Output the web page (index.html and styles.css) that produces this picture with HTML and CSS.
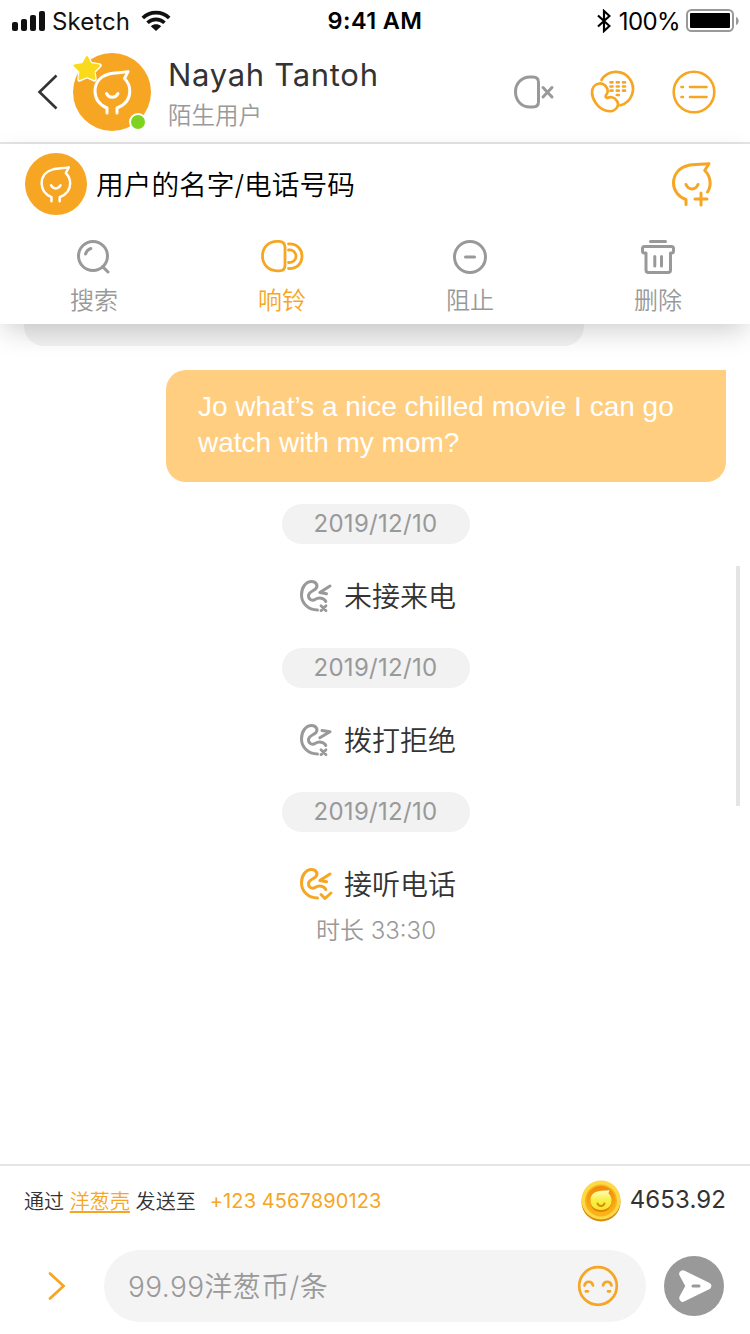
FILE: index.html
```html
<!DOCTYPE html>
<html lang="zh-CN">
<head>
<meta charset="utf-8">
<title>Chat</title>
<link rel="stylesheet" href="styles.css">
</head>
<body>
<svg class="defs" width="0" height="0">
  <symbol id="onion" viewBox="0 0 39 45">
    <path d="M14 43V38C7 35 2 29 2 21C2 12 8 6 16 4C22 2.800 29 2.800 35 1.600L31.500 8.500C35 12 36.800 16.500 36.800 21C36.800 29 32 35 24 38V43"/>
    <path d="M13.500 23.500C16 28.500 22.500 28.500 25 23.500"/>
  </symbol>
  <symbol id="handset" viewBox="0 0 36 36">
    <path d="M18.500 31C9 31 2.500 24 2.500 16C2.500 8 7 2.500 12.700 2.500C17 2.500 19.300 6.500 17 9.500C15 12 9.500 12.500 9.500 16.700C9.500 20.500 13.300 22.300 16 20.500C20 18 25 18.800 26.800 22.500"/>
  </symbol>
</svg>
<div class="phone">
  <header class="status">
    <div class="status-left">
      <svg width="34" height="22" viewBox="0 0 34 22"><g fill="#111"><rect x="0" y="12" width="6" height="9" rx="2"/><rect x="9" y="9" width="6" height="12" rx="2"/><rect x="18" y="5" width="6" height="16" rx="2"/><rect x="27" y="1" width="6" height="20" rx="2"/></g></svg>
      <span class="carrier">Sketch</span>
      <svg class="wifi" width="30" height="22" viewBox="0 0 30 22"><g fill="none" stroke="#111" stroke-width="3.600"><path d="M1.800 8C9 .800 21 .800 28.200 8"/><path d="M6.500 12.800C11.500 8.200 18.500 8.200 23.500 12.800"/></g><path d="M9.800 16.200C13 13.700 17 13.700 20.200 16.200L15 21Z" fill="#111"/></svg>
    </div>
    <span class="clock">9:41 AM</span>
    <div class="status-right">
      <svg width="14" height="24" viewBox="0 0 14 24"><path d="M1 6.500L12.500 17L7 22V2L12.500 7L1 17.500" fill="none" stroke="#000" stroke-width="2.200"/></svg>
      <span class="percent">100%</span>
      <svg width="53" height="24" viewBox="0 0 53 24"><rect x="1" y="1" width="46" height="21" rx="4.500" fill="none" stroke="#999" stroke-width="2"/><rect x="4" y="4" width="40" height="15" rx="1" fill="#000"/><path d="M50 8C53.500 9 53.500 15 50 16Z" fill="#999"/></svg>
    </div>
  </header>

  <section class="topbar">
    <svg class="back" width="22" height="36" viewBox="0 0 22 36"><path d="M19.500 1.500L2.500 18L19.500 34.500" fill="none" stroke="#333" stroke-width="2.600"/></svg>
    <div class="avatar">
      <svg class="face" width="39" height="45"><use href="#onion"/></svg>
      <svg class="star" width="32" height="30" viewBox="0 0 32 30"><path d="M15 3L18.500 10L27.500 11.500L21.500 17.500L22.500 25.500L15 22L7.500 25.500L8.500 17.500L2 11.500L11 10Z" fill="#fff" stroke="#fff" stroke-width="4.500" stroke-linejoin="round"/><path d="M15 3L18.500 10L27 11.500L21.500 17.500L22.500 25L15 22L7.500 25L8.500 17.500L2.500 11.500L11 10Z" fill="#f9db1c" stroke="#f9db1c" stroke-width="2" stroke-linejoin="round"/></svg>
      <span class="online"></span>
    </div>
    <div class="who">
      <span class="name">Nayah Tantoh</span>
      <span class="kind">陌生用户</span>
    </div>
    <div class="actions">
      <svg class="mute" width="44" height="36" viewBox="0 0 44 36" fill="none" stroke="#999" stroke-width="3" stroke-linecap="round"><path d="M17 3H20Q25.500 3 25.500 8.500V27.500Q25.500 33 20 33H17C8.500 33 2.500 26.500 2.500 18S8.500 3 17 3Z"/><path d="M30 13.500L39 23M39 13.500L30 23"/></svg>
      <svg width="46" height="44" viewBox="0 0 46 44" fill="none" stroke="#f6a623" stroke-width="2.700" stroke-linecap="round"><path d="M11.500 10A17 17 0 1 1 30.500 35.300"/><path d="M9.500 13.500C14 13 18 17.500 17.700 21.500C17.500 24.500 14.800 25 15.800 27.200C16.800 29 18.500 26.500 22 27.300C26 28.300 29.500 33 27.500 36.700C25.500 40.500 21 42.300 15.500 40.500C8 38 2 29.500 2 22.500C2 17.500 5 14 9.500 13.500Z"/><path d="M20.500 12.300H22.500M26.800 12.300H28.800M33 12.300H35M20.500 16.500H22.500M26.800 16.500H28.800M33 16.500H35M20.500 20.700H22.500M26.800 20.700H28.800M33 20.700H35M26.800 25H28.800"/></svg>
      <svg width="44" height="44" viewBox="0 0 44 44" fill="none" stroke="#f6a623" stroke-width="2.600" stroke-linecap="round"><circle cx="22" cy="22" r="20.300"/><path d="M9.500 17H11M18 17H34.500M9.500 27H11M18 27H34.500"/></svg>
    </div>
  </section>

  <section class="panel">
    <div class="contact">
      <div class="avatar small"><svg class="face" width="32" height="37"><use href="#onion"/></svg></div>
      <span class="contact-name">用户的名字/电话号码</span>
      <svg class="add" width="42" height="46" viewBox="0 0 42 46" fill="none" stroke="#f6a623" stroke-width="3" stroke-linecap="round" stroke-linejoin="round"><path d="M15 43.500V38.500C7.500 36 2.500 29.500 2.500 22C2.500 13 8.500 6.500 17 4.500C23 3.300 31 3.500 38 2.700L33.700 9.500C39.500 15 41 24 36.500 31"/><path d="M15 23.500C17.500 29.500 24.500 29.500 27 23.500M30 32V44M24 38H36"/></svg>
    </div>
    <nav class="tools">
      <div class="tool"><svg width="36" height="36" viewBox="0 0 36 36" fill="none" stroke="#999" stroke-width="3" stroke-linecap="round"><circle cx="17" cy="17" r="14.500"/><path d="M26.500 27.500L32 33M9.500 15C10.500 12 12 10.300 14.800 9.500"/></svg><span>搜索</span></div>
      <div class="tool on"><svg width="44" height="36" viewBox="0 0 44 36" fill="none" stroke="#f6a623" stroke-width="2.800" stroke-linecap="round"><path d="M17 2.400H19Q25 2.400 25 8.500V26.500Q25 31.800 19 31.800H17C8.500 31.800 2.500 25.500 2.500 17S8.500 2.400 17 2.400Z"/><path d="M28.500 5C46.500 4 46.500 30.500 28.500 29.500M28.500 11C38.500 10 38.500 24.500 28.500 23.500"/></svg><span>响铃</span></div>
      <div class="tool"><svg width="36" height="36" viewBox="0 0 36 36" fill="none" stroke="#999" stroke-width="3" stroke-linecap="round"><circle cx="18" cy="18" r="15.500"/><path d="M13.500 18H22.500"/></svg><span>阻止</span></div>
      <div class="tool"><svg width="36" height="36" viewBox="0 0 36 36" fill="none" stroke="#999" stroke-width="3" stroke-linecap="round" stroke-linejoin="round"><path d="M10.500 2.500H25.500M6 14H4.500Q2.500 14 2.500 12V9.500Q2.500 7.500 4.500 7.500H31.500Q33.500 7.500 33.500 9.500V12Q33.500 14 31.500 14H30.500V31Q30.500 33.500 28 33.500H8.500Q6 33.500 6 31ZM14.800 17.500V27M21.500 17.500V27"/></svg><span>删除</span></div>
    </nav>
  </section>

  <main class="chat">
    <div class="bubble incoming"></div>
    <div class="bubble outgoing">Jo what’s a nice chilled movie I can go<br>watch with my mom?</div>
    <div class="entry">
      <span class="date">2019/12/10</span>
      <div class="call"><svg class="missed" width="36" height="36" viewBox="0 0 36 36"><use href="#handset" width="36" height="36"/><path d="M31 7L20.800 13.500L27.500 14.700"/><path class="cross" d="M22 26.700L27 31.700M27 26.700L22 31.700"/></svg><span>未接来电</span></div>
    </div>
    <div class="entry">
      <span class="date">2019/12/10</span>
      <div class="call"><svg class="missed" width="36" height="36" viewBox="0 0 36 36"><use href="#handset" width="36" height="36"/><path d="M23 7.500L31 8.700L20.800 14.800"/><path class="cross" d="M22 26.700L27 31.700M27 26.700L22 31.700"/></svg><span>拨打拒绝</span></div>
    </div>
    <div class="entry">
      <span class="date">2019/12/10</span>
      <div class="call"><svg class="answered" width="36" height="36" viewBox="0 0 36 36"><use href="#handset" width="36" height="36"/><path d="M31 7L20.800 13.500L27.500 14.700M22 27.500L26 31.500L32 26"/></svg><span>接听电话</span></div>
      <span class="duration">时长 33:30</span>
    </div>
    <span class="scrollbar"></span>
  </main>

  <footer class="composer">
    <div class="route">
      <span class="route-text">通过 <a>洋葱壳</a> 发送至</span>
      <span class="number">+123 4567890123</span>
      <svg class="coin" width="40" height="42" viewBox="0 0 40 42">
        <defs><linearGradient id="drop" x1="0" y1="0" x2="0" y2="1"><stop offset="0" stop-color="#fffbc4"/><stop offset=".5" stop-color="#f9f047"/><stop offset="1" stop-color="#fbe52a"/></linearGradient><linearGradient id="well" x1="0" y1="0" x2="0" y2="1"><stop offset="0" stop-color="#f08a0b"/><stop offset="1" stop-color="#fdb515"/></linearGradient></defs>
        <circle cx="20" cy="22" r="19.500" fill="#d98a12"/><circle cx="20" cy="20" r="19.500" fill="#fdd945"/><circle cx="20" cy="20.500" r="16" fill="#f7b51b"/><circle cx="20" cy="20.500" r="14.500" fill="url(#well)"/>
        <path d="M28.500 10C24 11.500 9.500 8.500 9.500 20.500C9.500 27 14 31 20 31C26 31 30.500 27 30.500 21C30.500 18 29.500 16 27.500 14Z" fill="#db850c" transform="translate(0 1)"/>
        <path d="M28.500 10C24 11.500 9.500 8.500 9.500 20.500C9.500 26.500 14 30 20 30C26 30 30.500 26.500 30.500 20.500C30.500 17.500 29.500 15.500 27.500 13.500Z" fill="url(#drop)"/>
        <path d="M16.500 23.500C17.500 26.700 22.500 26.700 23.500 23.500" fill="none" stroke="#d58a10" stroke-width="2" stroke-linecap="round"/>
      </svg>
      <span class="balance">4653.92</span>
    </div>
    <div class="entry-row">
      <svg class="expand" width="20" height="30" viewBox="0 0 20 30"><path d="M3 2.500L16.500 15L3 27.500" fill="none" stroke="#f6a623" stroke-width="2.800" stroke-linecap="round"/></svg>
      <div class="field"><span>99.99洋葱币/条</span>
        <svg width="42" height="42" viewBox="0 0 42 42" fill="none" stroke="#f6a623" stroke-width="2.700" stroke-linecap="round"><circle cx="21" cy="21" r="18.800"/><path d="M7.500 20.500C8.500 15.500 15 15.500 16 20.500M26 20.500C27 15.500 33.500 15.500 34.500 20.500M8.800 26.300H10.800M31 26.300H33"/></svg>
      </div>
      <svg class="send" width="60" height="60" viewBox="0 0 60 60"><circle cx="30" cy="30" r="30" fill="#999"/><path d="M19 18L43.500 30L19 42L25.500 30Z" fill="#fff" stroke="#fff" stroke-width="7.500" stroke-linejoin="round"/><path d="M29 30H35" stroke="#999" stroke-width="3" stroke-linecap="round"/></svg>
    </div>
  </footer>
</div>
</body>
</html>
```
FILE: styles.css
```css
* { box-sizing: border-box; }
body { margin: 0; background: #fff; }
svg { display: block; flex: none; }
.defs { position: absolute; }
.phone {
  width: 750px; height: 1334px; overflow: hidden;
  display: flex; flex-direction: column;
  font-family: Inter, "Noto Sans CJK SC", sans-serif;
  color: #333; white-space: nowrap;
}
.status { height: 42px; display: grid; grid-template-columns: 1fr auto 1fr; align-items: center; padding: 0 11px 0 12px; color: #000; }
.status-left { display: flex; align-items: center; gap: 6px; color: #111; }
.carrier { font-size: 24px; letter-spacing: .1px; }
.wifi { margin-left: 5px; }
.clock { margin-left: -1px; font-size: 23.500px; font-weight: 600; letter-spacing: .4px; line-height: 26px; padding-bottom: 1px; }
.status-right { display: flex; align-items: center; justify-content: flex-end; gap: 7px; }
.percent { font-size: 24px; letter-spacing: -.6px; margin: 0 -1px 0 1px; }

.topbar { height: 102px; flex: none; border-bottom: 2px solid #e5e5e5; display: flex; align-items: center; padding: 0 34px 0 37px; }
.back { margin-right: 14px; }
.avatar { position: relative; width: 78px; height: 78px; border-radius: 50%; background: #f6a623; display: flex; align-items: center; justify-content: center; }
.face { fill: none; stroke: #fff; stroke-width: 3; stroke-linecap: round; stroke-linejoin: round; }
.star { position: absolute; left: -1px; top: 1px; overflow: visible; }
.online { position: absolute; right: 4px; bottom: 0; width: 18px; height: 18px; border: 2px solid #fff; border-radius: 50%; background: #7ed321; }
.who { display: flex; flex-direction: column; margin-left: 17px; padding-top: 7px; }
.name { font-size: 31px; line-height: 40px; letter-spacing: .7px; font-weight: 400; }
.kind { font-size: 23.500px; line-height: 41px; color: #999; font-weight: 350; }
.actions { margin-left: auto; display: flex; align-items: center; gap: 36px; }
.mute { margin-right: -3px; }

.panel { position: relative; z-index: 1; height: 180px; flex: none; background: #fff; box-shadow: 0 10px 26px -4px rgba(0,0,0,.2); display: flex; flex-direction: column; }
.contact { height: 80px; display: flex; align-items: center; padding: 0 37px 0 25px; }
.avatar.small { width: 62px; height: 62px; }
.contact-name { margin-left: 9px; padding-bottom: 2px; font-size: 27.700px; font-weight: 350; color: #000; }
.add { margin-left: auto; }
.tools { display: grid; grid-template-columns: repeat(4, 188px); width: 752px; padding-top: 15px; }
.tool { display: flex; flex-direction: column; align-items: center; font-size: 24px; font-weight: 350; line-height: 36px; color: #999; gap: 8px; }
.tool.on { color: #f6a623; }

.chat { position: relative; height: 840px; flex: none; display: flex; flex-direction: column; align-items: center; }
.bubble { font-family: "Liberation Sans", Arial, sans-serif; }
.incoming { align-self: flex-start; width: 560px; height: 22px; margin-left: 24px; background: #f2f2f2; border-radius: 0 0 20px 20px; }
.outgoing { align-self: flex-end; width: 560px; height: 112px; margin: 24px 24px 22px 0; padding: 19px 32px; border-radius: 20px 0 20px 20px; background: #ffce80; color: #fff; font-size: 28px; line-height: 36px; }
.entry { height: 144px; display: flex; flex-direction: column; align-items: center; }
.date { width: 188px; height: 40px; margin-left: 2px; padding-right: 1px; border-radius: 20px; background: #f2f2f2; color: #999; font-size: 24px; font-weight: 400; line-height: 40px; letter-spacing: .3px; text-align: center; }
.call { display: flex; align-items: center; gap: 9px; height: 40px; margin: 33px 0 0 5px; font-size: 28px; font-weight: 350; line-height: 40px; }
.missed { stroke: #999; }
.answered { stroke: #f6a623; }
.call svg { fill: none; stroke-width: 3; stroke-linecap: round; stroke-linejoin: round; }
.call .cross { stroke-width: 2.800; }
.duration { margin-left: 2px; color: #999; font-size: 24px; line-height: 36px; margin-top: 8px; font-weight: 350; }
.scrollbar { position: absolute; right: 10px; top: 242px; width: 4px; height: 240px; background: #e5e5e5; }

.composer { height: 170px; flex: none; border-top: 2px solid #e5e5e5; }
.route { height: 70px; display: flex; align-items: center; padding: 0 24px; }
.route-text { font-size: 20px; font-weight: 350; letter-spacing: .05px; padding-bottom: 1px; }
.route-text a { color: #f6a623; text-decoration: underline; text-decoration-thickness: 2px; text-underline-offset: 2px; }
.number { margin-left: 14px; font-size: 20px; letter-spacing: .1px; color: #f6a623; }
.coin { margin-left: auto; }
.balance { margin-left: 9px; padding-bottom: 3px; font-size: 24px; letter-spacing: .1px; }
.entry-row { display: flex; align-items: center; margin-top: 14px; padding: 0 26px 0 47px; }
.field { width: 542px; height: 72px; margin: 0 18px 0 37px; padding: 0 27px 0 24px; border-radius: 36px; background: #f4f4f4; display: flex; align-items: center; justify-content: space-between; color: #999; font-size: 28px; font-weight: 350; letter-spacing: .4px; }
.field span { padding-bottom: 2px; }
```
